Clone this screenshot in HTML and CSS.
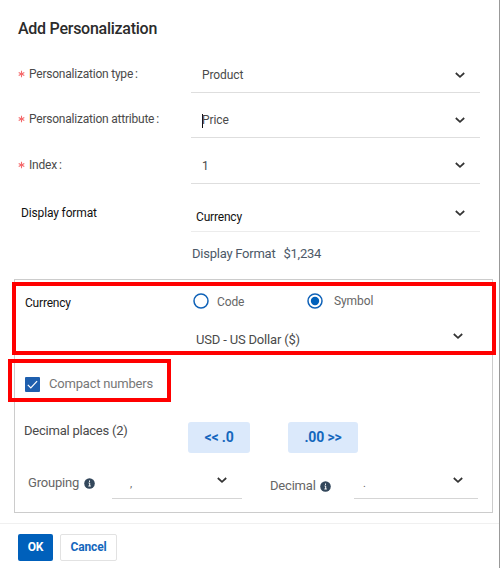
FILE: index.html
```html
<!DOCTYPE html>
<html lang="en">
<head>
<meta charset="utf-8">
<title>Add Personalization</title>
<link rel="stylesheet" href="styles.css">
</head>
<body>
<svg class="defs" width="0" height="0">
  <symbol id="chevron" viewBox="0 0 10 6"><path d="M.8 1L5 4.8 9.2 1" fill="none" stroke="#333" stroke-width="1.7"/></symbol>
  <symbol id="star" viewBox="0 0 8 8"><path d="M4 .4v7.2M.8 2.2l6.4 3.6M7.2 2.2L.8 5.8" fill="none" stroke="#f4696b" stroke-width="1.2"/></symbol>
  <symbol id="info" viewBox="0 0 11 11"><circle cx="5.5" cy="5.5" r="5.3" fill="#33475b"/><path d="M5.5 2.5v1.4M4.6 5h1.1v3M4.4 8h2.4" fill="none" stroke="#fff" stroke-width="1"/></symbol>
</svg>
<main class="dialog">
  <h1 class="title">Add Personalization</h1>
  <div class="row row-type">
    <div class="label"><svg class="star"><use href="#star"/></svg><span class="name">Personalization type</span><span class="colon">:</span></div>
    <div class="field"><span class="value">Product</span><svg class="chevron"><use href="#chevron"/></svg></div>
  </div>
  <div class="row row-attribute">
    <div class="label"><svg class="star"><use href="#star"/></svg><span class="name">Personalization attribute</span><span class="colon">:</span></div>
    <div class="field"><span class="value"><i class="caret"></i>Price</span><svg class="chevron"><use href="#chevron"/></svg></div>
  </div>
  <div class="row row-index">
    <div class="label"><svg class="star"><use href="#star"/></svg><span class="name">Index</span><span class="colon">:</span></div>
    <div class="field"><span class="value">1</span><svg class="chevron"><use href="#chevron"/></svg></div>
  </div>
  <div class="row row-format">
    <div class="label dark">Display format</div>
    <div class="field light"><span class="value dark">Currency</span><svg class="chevron"><use href="#chevron"/></svg></div>
  </div>
  <div class="preview"><span>Display Format</span><span>$1,234</span></div>
  <section class="options">
    <div class="highlight highlight-currency"></div>
    <div class="highlight highlight-compact"></div>
    <div class="currency">
      <span class="currency-label">Currency</span>
      <svg class="radio" viewBox="0 0 16 16"><circle cx="8" cy="8" r="7" fill="none" stroke="#0f62b8" stroke-width="1.5"/></svg><span class="code">Code</span>
      <svg class="radio" viewBox="0 0 16 16"><circle cx="8" cy="8" r="7" fill="none" stroke="#0f62b8" stroke-width="1.5"/><circle cx="8" cy="8" r="4.2" fill="#0060bb"/></svg><span class="symbol">Symbol</span>
    </div>
    <div class="unit"><span class="unit-name">USD - US Dollar ($)</span><svg class="chevron"><use href="#chevron"/></svg></div>
    <div class="compact">
      <svg class="check" viewBox="0 0 15 15"><rect width="15" height="15" rx="1" fill="#1f5fae"/><path d="M2.8 7.8l3 3 6.3-6.7" fill="none" stroke="#fff" stroke-width="1.2"/></svg>
      <span class="compact-name">Compact numbers</span>
    </div>
    <div class="places">
      <span class="places-label">Decimal places (2)</span>
      <button class="step fewer">&lt;&lt; .0</button>
      <button class="step more">.00 &gt;&gt;</button>
    </div>
    <div class="separators">
      <span class="grouping">Grouping</span><svg class="info info-grouping"><use href="#info"/></svg>
      <div class="picker picker-grouping"><span>,</span><svg class="chevron"><use href="#chevron"/></svg></div>
      <span class="decimal">Decimal</span><svg class="info info-decimal"><use href="#info"/></svg>
      <div class="picker picker-decimal"><span>.</span><svg class="chevron"><use href="#chevron"/></svg></div>
    </div>
  </section>
  <footer class="footer">
    <button class="ok">OK</button>
    <button class="cancel">Cancel</button>
  </footer>
</main>
</body>
</html>
```
FILE: styles.css
```css
* { box-sizing: border-box; }
body { margin: 0; background: #fff; font: 12px/20px Roboto, sans-serif; color: #4a4a4a; overflow: hidden; }
button { font-family: inherit; padding: 0; }
.defs { position: absolute; }
.dialog { width: 500px; height: 568px; border-right: 1px solid #999; }
.title { margin: 0; height: 56px; padding: 19px 0 0 18px; font-size: 16px; font-weight: 500; line-height: 20px; letter-spacing: -.26px; color: #2b2b2b; white-space: nowrap; }
.row { display: flex; align-items: flex-end; padding-left: 18px; }
.row-type { height: 37px; }
.row-attribute { height: 45px; }
.row-index { height: 46px; }
.row-format { height: 48px; }
.label { display: flex; align-items: center; width: 173px; margin-bottom: 9px; white-space: nowrap; }
.label.dark { padding-left: 3px; letter-spacing: -.14px; }
.name { letter-spacing: -.22px; }
.dark { color: #111; }
.star { width: 7px; height: 8px; margin-right: 4px; }
.colon { margin-left: 2px; }
.field { display: flex; justify-content: space-between; width: 289px; height: 28px; padding: 0 15px 0 11px; border-bottom: 1px solid #dedede; }
.value { letter-spacing: -.18px; }
.row-type .value, .row-attribute .value { letter-spacing: -.1px; }
.field.light { padding-left: 5px; border-bottom-color: #ececec; }
.field.light .value { padding-top: 3px; }
.field.light .chevron { margin-top: 6px; }
.chevron { width: 10px; height: 6px; margin-top: 7px; }
.row-index .chevron { margin-top: 6px; }
.caret { display: inline-block; width: 1px; height: 14px; margin-right: -1px; vertical-align: -4px; background: #111; }
.preview { display: flex; gap: 8px; height: 47px; padding: 12px 0 0 192px; font-size: 13px; letter-spacing: -.24px; color: #4d5968; }
.options { position: relative; width: 479px; height: 234px; margin-left: 14px; border: 1px solid #ccc; }
.highlight { position: absolute; border: 4px solid #f00; }
.highlight-currency { left: -3px; top: 2px; width: 484px; height: 73px; }
.highlight-compact { left: -7px; top: 79px; width: 163px; height: 43px; }
.currency { display: flex; height: 48px; padding: 11px 0 0 10px; }
.currency-label { width: 168px; padding-top: 2px; letter-spacing: -.2px; color: #111; }
.radio { width: 16px; height: 16px; margin-top: 2px; }
.code { width: 74px; margin: 1px 16px 0 8px; letter-spacing: -.1px; color: #666; }
.symbol { margin-left: 11px; letter-spacing: -.1px; color: #666; }
.unit { display: flex; justify-content: space-between; height: 46px; padding: 2px 29px 0 181px; font-size: 13px; letter-spacing: -.18px; }
.unit .chevron { margin-top: 3px; }
.compact { display: flex; padding-left: 10px; font-size: 13px; letter-spacing: -.2px; color: #777; }
.check { width: 15px; height: 15px; margin: 3px 9px 0 0; }
.places { display: flex; height: 54px; margin-top: 28px; padding-left: 9px; font-size: 13px; letter-spacing: -.23px; }
.places-label { width: 164px; margin-top: -1px; }
.step { width: 62px; height: 31px; padding-bottom: 2px; border: 0; border-radius: 3px; background: #dbe9fb; color: #1467bd; font-size: 14px; font-weight: 700; letter-spacing: -.15px; }
.more { width: 70px; margin-left: 38px; }
.separators { display: flex; height: 32px; margin-top: -3px; padding-left: 13px; font-size: 13px; letter-spacing: -.2px; color: #666; }
.grouping { width: 56px; }
.decimal { width: 50px; margin-left: 28px; padding-top: 3px; }
.info { width: 11px; height: 11px; margin-top: 5px; }
.info-decimal { margin-top: 8px; }
.picker { display: flex; justify-content: space-between; width: 130px; height: 26px; margin-left: 17px; padding: 1px 15px 0 18px; border-bottom: 1px solid #d5d5d5; font-size: 11px; }
.picker .chevron { margin-top: 3px; }
.picker-decimal { width: 124px; margin-left: 23px; padding-left: 9px; }
.footer { display: flex; gap: 7px; height: 45px; margin-top: 10px; padding: 10px 0 0 18px; border-top: 1px solid #f0f0f0; }
.ok, .cancel { height: 27px; padding-bottom: 1px; border-radius: 2px; font-size: 12px; font-weight: 700; letter-spacing: -.15px; }
.ok { width: 35px; border: 0; background: #0060bb; color: #fff; }
.cancel { width: 57px; border: 1px solid #e2e2e2; background: #fff; color: #1467bd; }
```
